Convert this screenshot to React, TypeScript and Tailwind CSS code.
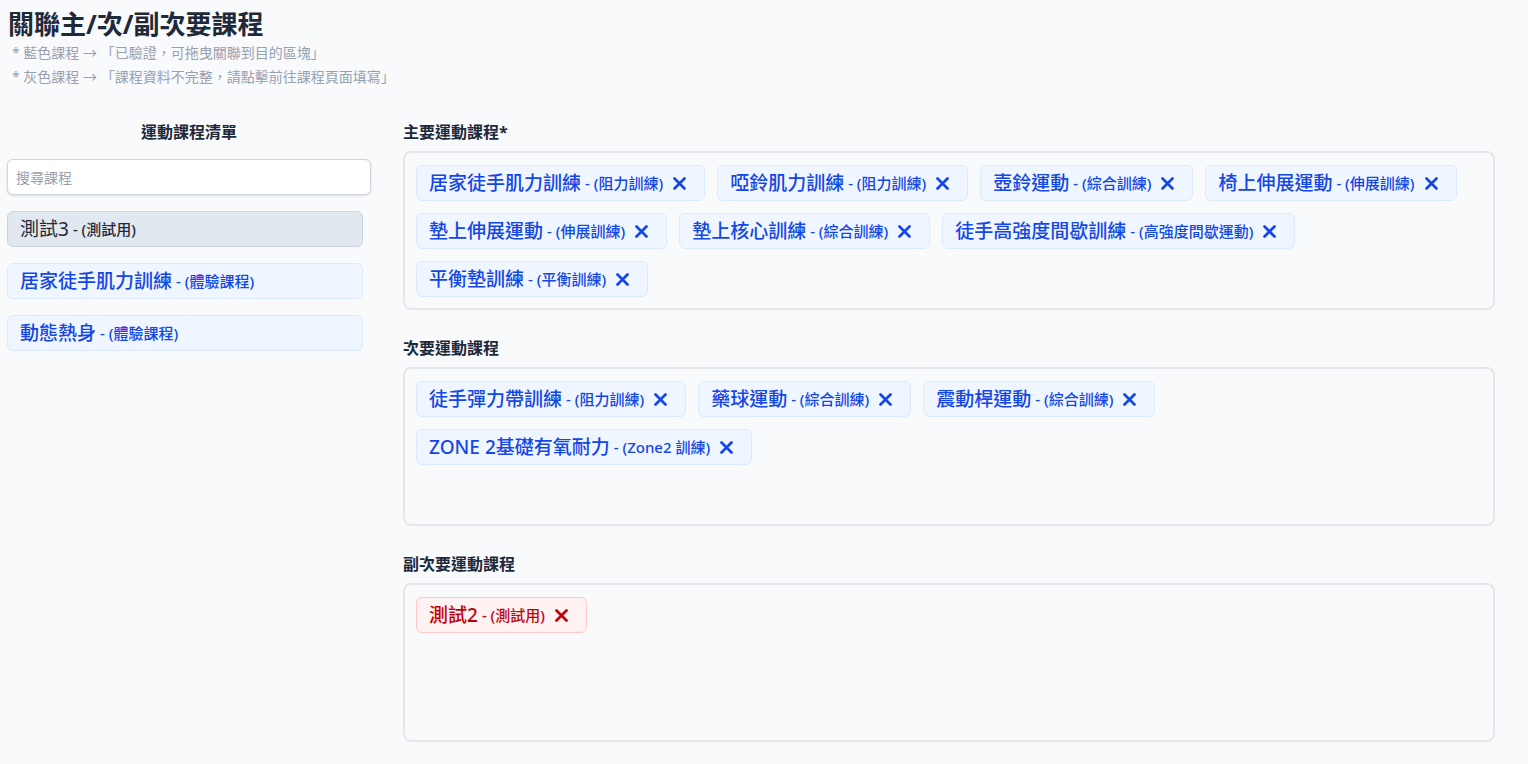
import React from "react";

type Course = { name: string; tag: string };

const primary: Course[] = [
  { name: "居家徒手肌力訓練", tag: "阻力訓練" },
  { name: "啞鈴肌力訓練", tag: "阻力訓練" },
  { name: "壺鈴運動", tag: "綜合訓練" },
  { name: "椅上伸展運動", tag: "伸展訓練" },
  { name: "墊上伸展運動", tag: "伸展訓練" },
  { name: "墊上核心訓練", tag: "綜合訓練" },
  { name: "徒手高強度間歇訓練", tag: "高強度間歇運動" },
  { name: "平衡墊訓練", tag: "平衡訓練" },
];

const secondary: Course[] = [
  { name: "徒手彈力帶訓練", tag: "阻力訓練" },
  { name: "藥球運動", tag: "綜合訓練" },
  { name: "震動桿運動", tag: "綜合訓練" },
  { name: "ZONE 2基礎有氧耐力", tag: "Zone2 訓練" },
];

const tertiary: Course[] = [{ name: "測試2", tag: "測試用" }];

const XIcon = () => (
  <svg width="13" height="13" viewBox="0 0 13 13" className="shrink-0">
    <path d="M1.5 1.5 11.5 11.5 M11.5 1.5 1.5 11.5" stroke="currentColor" strokeWidth="2.7" strokeLinecap="round" />
  </svg>
);

const Chip = ({ c, red }: { c: Course; red?: boolean }) => (
  <div
    className={
      red
        ? "flex items-center rounded-md border border-red-200 bg-red-50 py-[5px] pl-3 pr-[18px] text-red-700"
        : "flex items-center rounded-md border border-blue-100 bg-blue-50 py-[5px] pl-3 pr-[18px] text-blue-700"
    }
  >
    <span className="text-[19px] leading-6 font-medium">{c.name}</span>
    <span className="ml-1 text-[15px] leading-6 font-medium">- ({c.tag})</span>
    <span className="ml-[10px]">
      <XIcon />
    </span>
  </div>
);

const Section = ({ label, items, red }: { label: string; items: Course[]; red?: boolean }) => (
  <div>
    <div className="mb-[7px] text-base leading-6 font-bold text-gray-800">{label}</div>
    <div className="flex min-h-[159px] flex-wrap content-start gap-3 rounded-lg border-2 border-gray-200 bg-slate-50 px-[11px] pt-3 pb-[11px]">
      {items.map((c) => (
        <Chip key={c.name} c={c} red={red} />
      ))}
    </div>
  </div>
);

export default function App() {
  return (
    <div
      className="min-h-screen bg-slate-50 pt-2 pl-[7px] pr-[33px]"
      style={{ fontFamily: '"Noto Sans", "Noto Sans CJK TC", sans-serif' }}
    >
      <h1 className="ml-px text-[26px] leading-8 font-bold text-gray-800">關聯主/次/副次要課程</h1>
      <div className="ml-[5px] mt-px text-sm leading-6 text-gray-400">
        <p>* 藍色課程 → 「已驗證，可拖曳關聯到目的區塊」</p>
        <p>* 灰色課程 → 「課程資料不完整，請點擊前往課程頁面填寫」</p>
      </div>

      <div className="mt-[31px] flex gap-8">
        {/* left list */}
        <div className="w-[364px] shrink-0">
          <div className="mb-[15px] text-center text-base leading-6 font-bold text-gray-800">運動課程清單</div>
          <input
            placeholder="搜尋課程"
            className="h-9 w-full rounded-md border border-gray-300 bg-white px-2 text-sm text-gray-800 placeholder:text-gray-400 shadow-sm outline-none"
          />
          <div className="mt-4 flex w-[356px] flex-col gap-4">
            <div className="flex h-9 items-center rounded-md border border-slate-300 bg-slate-200 px-3 text-gray-800">
              <span className="text-[19px]">測試3</span>
              <span className="ml-1 text-[15px] font-medium">- (測試用)</span>
            </div>
            <div className="flex h-9 items-center rounded-md border border-blue-100 bg-blue-50 px-3 text-blue-700">
              <span className="text-[19px] font-medium">居家徒手肌力訓練</span>
              <span className="ml-1 text-[15px] font-medium">- (體驗課程)</span>
            </div>
            <div className="flex h-9 items-center rounded-md border border-blue-100 bg-blue-50 px-3 text-blue-700">
              <span className="text-[19px] font-medium">動態熱身</span>
              <span className="ml-1 text-[15px] font-medium">- (體驗課程)</span>
            </div>
          </div>
        </div>

        {/* right drop zones */}
        <div className="flex flex-1 flex-col gap-[26px]">
          <Section label="主要運動課程*" items={primary} />
          <Section label="次要運動課程" items={secondary} />
          <Section label="副次要運動課程" items={tertiary} red />
        </div>
      </div>
    </div>
  );
}
